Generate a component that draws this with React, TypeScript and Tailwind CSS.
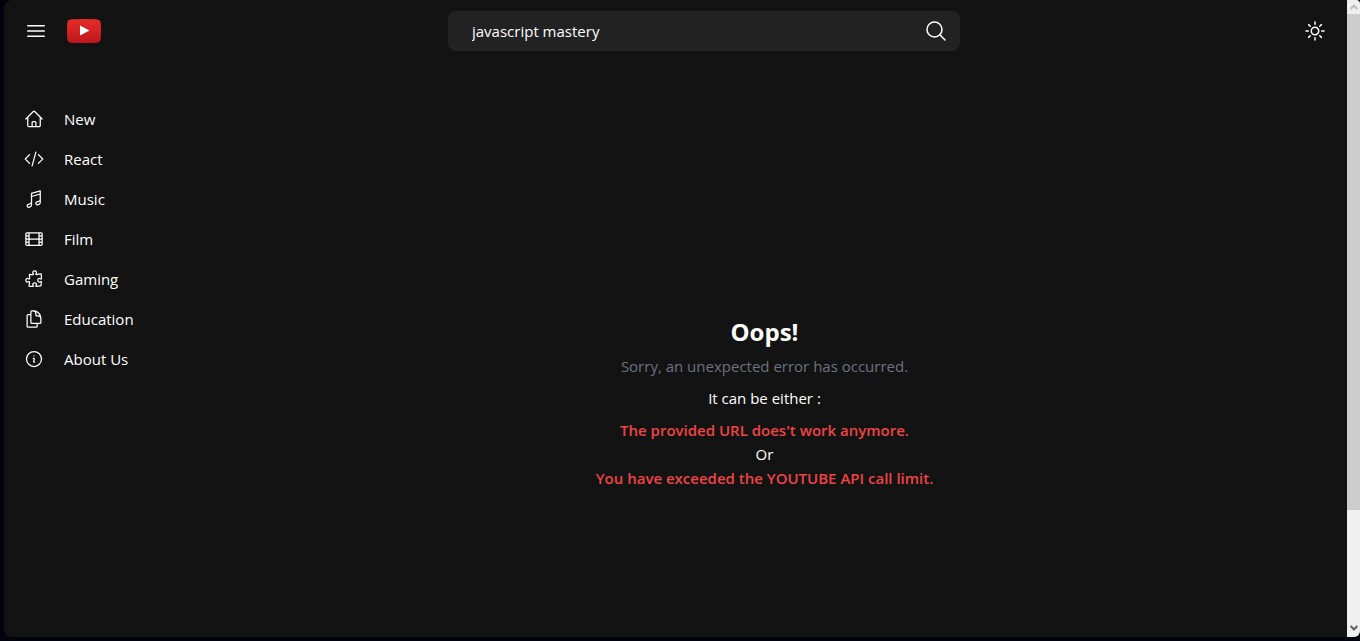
import React, { useState } from 'react';
import {
  HiOutlineBars3,
  HiOutlineMagnifyingGlass,
  HiOutlineSun,
  HiOutlineHome,
  HiOutlineCodeBracket,
  HiOutlineMusicalNote,
  HiOutlineFilm,
  HiOutlinePuzzlePiece,
  HiOutlineDocumentDuplicate,
  HiOutlineInformationCircle,
} from 'react-icons/hi2';

const categories = [
  { name: 'New', icon: HiOutlineHome },
  { name: 'React', icon: HiOutlineCodeBracket },
  { name: 'Music', icon: HiOutlineMusicalNote },
  { name: 'Film', icon: HiOutlineFilm },
  { name: 'Gaming', icon: HiOutlinePuzzlePiece },
  { name: 'Education', icon: HiOutlineDocumentDuplicate },
  { name: 'About Us', icon: HiOutlineInformationCircle },
];

const Logo = () => (
  <svg viewBox="0 0 34 24" className="h-6 w-[34px]">
    <defs>
      <linearGradient id="logo" x1="0" y1="0" x2="0" y2="1">
        <stop offset="0" stopColor="#e52d27" />
        <stop offset="1" stopColor="#bf171d" />
      </linearGradient>
    </defs>
    <path d="M5 .2Q17-.2 29 .2C32.500.4 33.700 2 33.800 5Q34.200 12 33.800 19C33.700 22 32.500 23.600 29 23.800Q17 24.200 5 23.800C1.500 23.600.3 22 .2 19Q-.2 12 .2 5C.3 2 1.500.4 5 .2Z" fill="url(#logo)" />
    <path d="M13 6.500v10l9.500-5z" fill="#fff" />
  </svg>
);

const Scrollbar = () => (
  <div className="flex w-[13px] flex-col bg-[#f0f0f0]">
    <div className="flex h-[14px] items-center justify-center">
      <svg viewBox="0 0 8 6" className="h-[6px] w-2 fill-none stroke-[#bcbcbc] stroke-2"><path d="M.7 5L4 1.500 7.300 5" /></svg>
    </div>
    <div className="flex-1">
      <div className="h-[82%] bg-[#cdcdcd]" />
    </div>
    <div className="flex h-[18px] items-center justify-center">
      <svg viewBox="0 0 8 6" className="h-[6px] w-2 fill-none stroke-[#606060] stroke-2"><path d="M.7 1L4 4.500 7.300 1" /></svg>
    </div>
  </div>
);

const App: React.FC = () => {
  const [term, setTerm] = useState('javascript mastery');

  return (
    <div className="h-screen bg-[#02030f] pb-1 pl-1 font-['Open_Sans',sans-serif] text-[15px] leading-6 text-white">
      <div className="flex h-full overflow-hidden rounded-l-lg rounded-tr-sm rounded-br-md bg-[#131313]">
        <div className="flex min-w-0 flex-1 flex-col">
          <header className="flex items-center justify-between px-5 py-[11px]">
            <div className="flex items-center gap-[19px] pr-1">
              <button aria-label="Menu"><HiOutlineBars3 className="size-6" /></button>
              <a href="#" aria-label="Home"><Logo /></a>
            </div>
            <form className="flex h-10 w-full max-w-lg items-center rounded-lg bg-[#222222] pl-6 pr-3" onSubmit={e => e.preventDefault()}>
              <input
                aria-label="Search"
                className="min-w-0 flex-1 bg-transparent outline-none"
                value={term}
                onChange={e => setTerm(e.target.value)}
              />
              <button aria-label="Search"><HiOutlineMagnifyingGlass className="size-6" /></button>
            </form>
            <button aria-label="Toggle theme"><HiOutlineSun className="size-6" /></button>
          </header>
          <div className="flex min-h-0 flex-1">
            <nav className="w-[178px] pl-5 pt-[37px]">
              {categories.map(({ name, icon: Icon }) => (
                <a key={name} href="#" className="flex h-10 items-center gap-5">
                  <Icon className="size-5" />
                  {name}
                </a>
              ))}
            </nav>
            <main className="flex flex-1 flex-col items-center pt-[252px] text-center">
              <h1 className="text-2xl/9 font-bold">Oops!</h1>
              <p className="mt-1 text-[#6b7280]">Sorry, an unexpected error has occurred.</p>
              <p className="my-2">It can be either :</p>
              <p className="font-semibold text-[#ef4444]">The provided URL does't work anymore.</p>
              <p>Or</p>
              <p className="font-semibold text-[#ef4444]">You have exceeded the YOUTUBE API call limit.</p>
            </main>
          </div>
        </div>
        <Scrollbar />
      </div>
    </div>
  );
};

export default App;
